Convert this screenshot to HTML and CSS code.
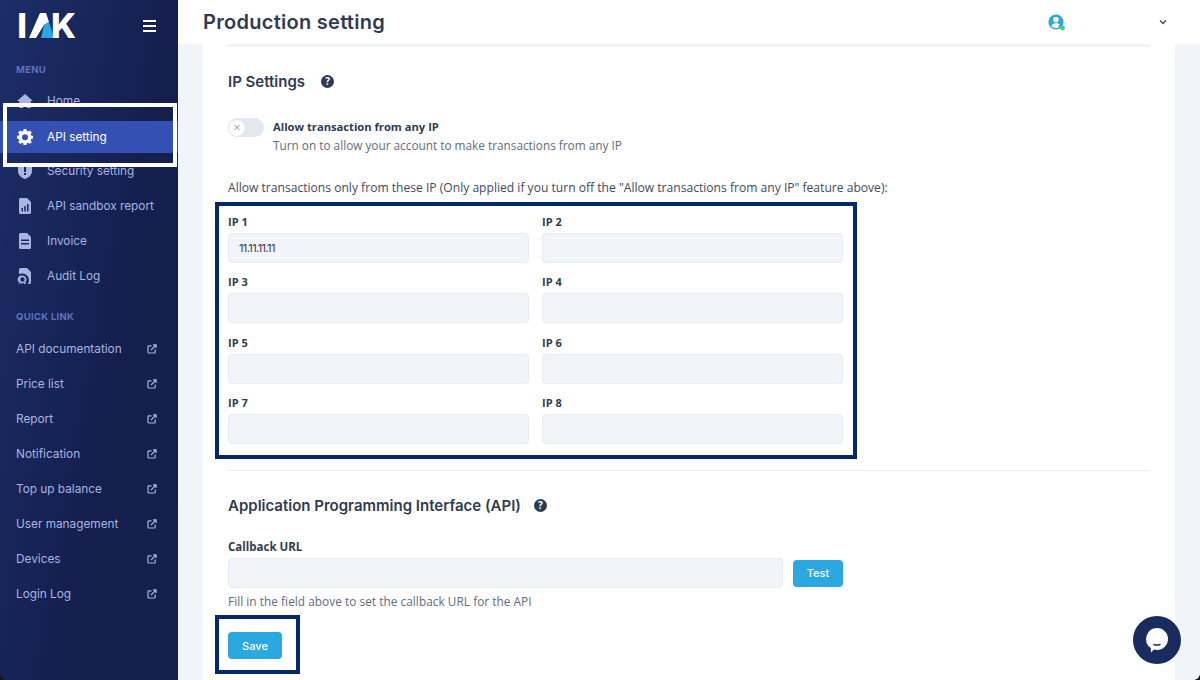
FILE: index.html
```html
<!DOCTYPE html>
<html lang="en">
<head>
  <meta charset="UTF-8">
  <meta name="viewport" content="width=device-width, initial-scale=1.0">
  <title>Production setting</title>
  <link rel="stylesheet" href="styles.css">
</head>
<body>
  <div class="app">
    <aside class="sidebar">
      <div class="brand">
        <svg class="logo" width="62" height="44" viewBox="0 -7 62 44">
          <text x="1.300" y="27" class="logo-letter">I</text>
          <polygon points="13,27 24,2 30,2 33,11 28,14 20,27" fill="#fff"/>
          <polygon points="28,14 33,11 38,27 25,27" fill="#2ba8e0"/>
          <text x="35" y="27" class="logo-letter">K</text>
        </svg>
        <div class="burger"><span></span><span></span><span></span></div>
      </div>

      <div class="nav-label nav-label-menu">MENU</div>
      <a class="nav-item">
        <svg class="nav-icon" viewBox="0 0 16 16"><path d="M8 1 0 8h2.200v7h4v-4.500h3.600V15h4V8H16z"/></svg>
        Home
      </a>
      <a class="nav-item active">
        <svg class="nav-icon" viewBox="0 0 16 16"><path fill-rule="evenodd" d="M6.600 0h2.800l.4 2.100 1.200.5L12.800 1.400l2 2-1.200 1.800.5 1.200 1.900.4v2.800l-1.900.4-.5 1.200 1.200 1.800-2 2-1.800-1.200-1.200.5-.4 2.100H6.600l-.4-2.100-1.200-.5-1.800 1.200-2-2 1.200-1.800-.5-1.200L0 9.600V6.800l1.900-.4.500-1.200L1.200 3.400l2-2L5 2.600l1.200-.5zM8 5.200a3 3 0 1 0 0 6 3 3 0 0 0 0-6z"/></svg>
        API setting
      </a>
      <a class="nav-item">
        <svg class="nav-icon" viewBox="0 0 16 16"><path fill-rule="evenodd" d="M8 0 15 2.500V8c0 4-3.200 6.800-7 8-3.800-1.200-7-4-7-8V2.500zM7 4v5h2V4zm0 6v2h2v-2z"/></svg>
        Security setting
      </a>
      <a class="nav-item">
        <svg class="nav-icon" viewBox="0 0 16 16"><path fill-rule="evenodd" d="M3.500 0H10l4 4v10.500a1.500 1.500 0 0 1-1.500 1.500h-9A1.500 1.500 0 0 1 2 14.500v-13A1.500 1.500 0 0 1 3.500 0zM4.500 10v3.500h1.500V10zm2.800-2v5.500h1.500V8zm2.800-2v7.500h1.500V6z"/></svg>
        API sandbox report
      </a>
      <a class="nav-item">
        <svg class="nav-icon" viewBox="0 0 16 16"><path fill-rule="evenodd" d="M3.500 0H10l4 4v10.500a1.500 1.500 0 0 1-1.500 1.500h-9A1.500 1.500 0 0 1 2 14.500v-13A1.500 1.500 0 0 1 3.500 0zM4 6.500V8h8V6.500zM4 10v1.500h8V10z"/></svg>
        Invoice
      </a>
      <a class="nav-item">
        <svg class="nav-icon" viewBox="0 0 16 16"><path fill-rule="evenodd" d="M3.500 0H10l4 4v10.500a1.500 1.500 0 0 1-1.500 1.500H11c.6-1 1-2.200 1-3.500C12 8.500 9 5.500 5 5.500c-1.100 0-2.100.2-3 .7V1.500A1.500 1.500 0 0 1 3.500 0zM5.500 7.500a4 4 0 0 1 2.500 7.100L9.500 16H7.500l-1-1a4 4 0 1 1-1-7.500zm0 1.800a2.200 2.200 0 1 0 0 4.400 2.200 2.200 0 0 0 0-4.400zM2.600 14l-1.400 1.600.9.400 1.400-1.400z"/></svg>
        Audit Log
      </a>

      <div class="nav-label nav-label-quick">QUICK LINK</div>
      <a class="quick-item">API documentation<svg class="ext-icon" viewBox="0 0 10 10"><use href="#ext"/></svg></a>
      <a class="quick-item">Price list<svg class="ext-icon" viewBox="0 0 10 10"><use href="#ext"/></svg></a>
      <a class="quick-item">Report<svg class="ext-icon" viewBox="0 0 10 10"><use href="#ext"/></svg></a>
      <a class="quick-item">Notification<svg class="ext-icon" viewBox="0 0 10 10"><use href="#ext"/></svg></a>
      <a class="quick-item">Top up balance<svg class="ext-icon" viewBox="0 0 10 10"><use href="#ext"/></svg></a>
      <a class="quick-item">User management<svg class="ext-icon" viewBox="0 0 10 10"><use href="#ext"/></svg></a>
      <a class="quick-item">Devices<svg class="ext-icon" viewBox="0 0 10 10"><use href="#ext"/></svg></a>
      <a class="quick-item">Login Log<svg class="ext-icon" viewBox="0 0 10 10"><use href="#ext"/></svg></a>
    </aside>

    <div class="main">
      <header class="topbar">
        <h1>Production setting</h1>
        <div class="user">
          <svg class="user-icon" width="18" height="18" viewBox="0 0 18 18">
            <circle cx="8" cy="8" r="7.600" fill="#2ba8e0"/>
            <circle cx="8" cy="5.800" r="2.700" fill="#fff"/>
            <path d="M3.500 12.500c.4-2.200 2.200-3.200 4.500-3.200 1.600 0 3 .4 3.800 1.200l-1.300 1.500.2 1.400c-2 .9-5 .7-7.200-.9z" fill="#fff"/>
            <circle cx="14.500" cy="14" r="2.400" fill="#3ccf8e"/>
          </svg>
          <svg class="chevron" width="8" height="6" viewBox="0 0 8 6"><path d="M1 1.500 4 4.500 7 1.500" fill="none" stroke="#3a4455" stroke-width="1.300"/></svg>
        </div>
      </header>

      <div class="content">
        <section class="card">
          <hr class="line line-top">

          <div class="section-title title-ip">
            <h2>IP Settings</h2>
            <span class="help">?</span>
          </div>

          <div class="toggle-row">
            <div class="toggle"><span class="knob">&times;</span></div>
            <div>
              <div class="toggle-title">Allow transaction from any IP</div>
              <div class="muted toggle-sub">Turn on to allow your account to make transactions from any IP</div>
            </div>
          </div>

          <p class="ip-note">Allow transactions only from these IP (Only applied if you turn off the "Allow transactions from any IP" feature above):</p>

          <div class="ip-grid">
            <div class="field"><label>IP 1</label><input type="text" value="11.11.11.11"></div>
            <div class="field"><label>IP 2</label><input type="text"></div>
            <div class="field"><label>IP 3</label><input type="text"></div>
            <div class="field"><label>IP 4</label><input type="text"></div>
            <div class="field"><label>IP 5</label><input type="text"></div>
            <div class="field"><label>IP 6</label><input type="text"></div>
            <div class="field"><label>IP 7</label><input type="text"></div>
            <div class="field"><label>IP 8</label><input type="text"></div>
          </div>

          <hr class="line line-mid">

          <div class="section-title title-api">
            <h2>Application Programming Interface (API)</h2>
            <span class="help">?</span>
          </div>

          <label class="callback-label">Callback URL</label>
          <div class="callback-row">
            <input type="text">
            <button class="btn btn-test">Test</button>
          </div>
          <div class="muted callback-help">Fill in the field above to set the callback URL for the API</div>
          <button class="btn btn-save">Save</button>
        </section>
      </div>
    </div>
  </div>

  <!-- annotation boxes that sit over the screenshot -->
  <div class="mark mark-nav"></div>
  <div class="mark mark-ip"></div>
  <div class="mark mark-save"></div>

  <div class="chat">
    <svg width="30" height="32" viewBox="0 0 30 32">
      <path d="M15 4a11 11 0 0 1 0 22c-1 0-2-.1-3-.4L9 28.500l-.2-4.500A11 11 0 0 1 15 4z" fill="#fff"/>
      <path d="M12 20.500c2 .8 4 .8 6 0" fill="none" stroke="#1a2b60" stroke-width="1.500" stroke-linecap="round"/>
    </svg>
  </div>

  <svg class="defs" width="0" height="0">
    <symbol id="ext" viewBox="0 0 10 10">
      <path d="M4.500 1.800H1.800a.8.8 0 0 0-.8.8v5.600c0 .4.400.8.800.8h5.600c.4 0 .8-.4.800-.8V5.500M4 6l5-5M6 .9h3.100V4" fill="none" stroke="#a9b4e0" stroke-width="1.200"/>
    </symbol>
  </svg>
</body>
</html>
```

FILE: styles.css
```css
* {
  box-sizing: border-box;
}

html, body {
  margin: 0;
  height: 680px;
  overflow: hidden;
}

body {
  position: relative;
  font-family: "Open Sans", Arial, sans-serif;
  background-color: #f1f4f9;
  color: #2f3b52;
}

/* rounded window corners at the bottom of the capture */
body::before,
body::after {
  content: "";
  position: absolute;
  bottom: 0;
  width: 6px;
  height: 6px;
  z-index: 2;
}

body::before {
  left: 0;
  background: radial-gradient(circle at top right, transparent 5.5px, #14161c 6px);
}

body::after {
  right: 0;
  background: radial-gradient(circle at top left, transparent 5.5px, #14161c 6px);
}

.app {
  display: flex;
  height: 680px;
}

/* sidebar */
.sidebar {
  width: 178px;
  flex-shrink: 0;
  background: linear-gradient(100deg, #1c2d68 0%, #141f4e 60%, #15204f 100%);
  color: #a9b4e0;
  font-family: Inter, Arial, sans-serif;
  font-size: 11.800px;
}

.brand {
  display: flex;
  align-items: center;
  justify-content: space-between;
  height: 50px;
  padding: 1px 22px 0 16px;
}

.logo-letter {
  font-family: Inter, Arial, sans-serif;
  font-weight: 800;
  font-size: 34px;
  fill: #fff;
}

.burger {
  display: flex;
  flex-direction: column;
  gap: 3px;
  width: 13px;
}

.burger span {
  height: 2px;
  background-color: #fff;
}

.nav-label {
  color: #5f72c0;
  font-size: 9.500px;
  font-weight: 700;
  letter-spacing: 0.3px;
  padding-left: 16px;
  line-height: 12px;
}

.nav-label-menu {
  margin-top: 14px;
  margin-bottom: 7.500px;
}

.nav-label-quick {
  margin-top: 17.500px;
  margin-bottom: 8px;
}

.nav-item {
  display: flex;
  align-items: center;
  gap: 14px;
  height: 35px;
  padding-left: 17px;
}

.nav-icon {
  width: 16px;
  height: 16px;
  fill: #a9b4e0;
}

.nav-item.active {
  height: 32px;
  margin: 2px 0 1px;
  background-color: #3450b2;
  color: #fff;
}

.nav-item.active .nav-icon {
  fill: #fff;
}

.quick-item {
  display: flex;
  align-items: center;
  justify-content: space-between;
  height: 35px;
  padding: 0 21px 0 16px;
}

.ext-icon {
  width: 10px;
  height: 10px;
}

/* main */
.main {
  flex: 1;
  min-width: 0;
  display: flex;
  flex-direction: column;
}

.topbar {
  display: flex;
  align-items: center;
  justify-content: space-between;
  height: 44px;
  flex-shrink: 0;
  padding: 0 33px 0 25px;
  background-color: #fff;
  position: relative;
}

.topbar h1 {
  margin: 0;
  font-family: Inter, Arial, sans-serif;
  font-size: 20px;
  font-weight: 600;
  letter-spacing: 0.28px;
}

.user {
  display: flex;
  align-items: center;
  gap: 93px;
}

.user-icon {
  margin-top: 2px;
}

.content {
  flex: 1;
  padding: 0 25px;
  min-height: 0;
}

.card {
  height: 100%;
  background-color: #fff;
  padding: 0 25px;
}

.line {
  margin: 0;
  border: 0;
  border-top: 1px solid #e8ebf0;
}

.line-top {
  border-top: 3px solid #f1f3f6;
}

.line-mid {
  margin-top: 19px;
}

.section-title {
  display: flex;
  align-items: center;
  gap: 15px;
}

.section-title h2 {
  margin: 0;
  font-family: Inter, Arial, sans-serif;
  font-size: 15px;
  font-weight: 600;
  line-height: 20px;
}

.title-ip {
  margin-top: 25px;
  gap: 16px;
}

.title-api {
  margin-top: 25px;
  gap: 13px;
}

.help {
  width: 13px;
  height: 13px;
  margin-top: -2px;
  border-radius: 50%;
  background-color: #2d3a50;
  color: #fff;
  font-size: 10px;
  font-weight: 700;
  line-height: 13px;
  text-align: center;
}

.toggle-row {
  display: flex;
  gap: 9px;
  margin-top: 25px;
}

.toggle {
  width: 36px;
  height: 19px;
  margin-top: 1px;
  border-radius: 10px;
  background-color: #e2e8f0;
}

.knob {
  display: block;
  width: 18px;
  height: 18px;
  margin-top: 0.5px;
  border-radius: 50%;
  border: 1px solid #dfe3ea;
  background-color: #fff;
  color: #9aa3b2;
  font-size: 13px;
  line-height: 15px;
  text-align: center;
}

.toggle-title {
  font-size: 11.200px;
  font-weight: 700;
  line-height: 19px;
}

.muted {
  color: #5f6b82;
  font-size: 11.800px;
}

.toggle-sub {
  line-height: 19px;
}

.ip-note {
  margin: 24px 0 0;
  font-size: 12.100px;
  line-height: 17px;
  color: #3e4a60;
}

.ip-grid {
  display: grid;
  grid-template-columns: 301px 301px;
  column-gap: 13px;
  row-gap: 0;
  margin-top: 14px;
}

.field {
  height: 60.3px;
}

label {
  display: block;
  font-size: 12px;
  font-weight: 700;
  line-height: 16px;
}

.field label {
  margin-top: 4px;
  margin-bottom: 3px;
  font-size: 11px;
}

input[type="text"] {
  display: block;
  width: 100%;
  height: 30px;
  padding: 0 10px;
  border: 1px solid #e8ebf1;
  border-radius: 4px;
  background-color: #f1f4f8;
  color: #2f3b52;
  font-family: Inter, Arial, sans-serif;
  font-size: 11px;
  letter-spacing: -0.6px;
}

.callback-label {
  margin-top: 23px;
  font-size: 11.500px;
}

.callback-row {
  display: flex;
  align-items: center;
  gap: 10px;
  width: 615px;
  margin-top: 3px;
}

.callback-row input {
  flex: 1;
}

.btn {
  border: none;
  border-radius: 4px;
  background-color: #2ba8e0;
  color: #fff;
  font-family: Inter, Arial, sans-serif;
  font-size: 11px;
  font-weight: 500;
}

.btn-test {
  width: 50px;
  height: 27px;
}

.btn-save {
  display: block;
  width: 54px;
  height: 27px;
  margin-top: 23px;
}

.callback-help {
  margin-top: 5px;
  line-height: 16px;
  letter-spacing: 0.05px;
}

/* annotation boxes */
.mark {
  position: absolute;
  border-style: solid;
}

.mark-nav {
  left: 3px;
  top: 103px;
  width: 174px;
  height: 64px;
  border-width: 4px;
  border-color: #fff;
}

.mark-ip {
  left: 215px;
  top: 202px;
  width: 642px;
  height: 257px;
  border-width: 4px;
  border-color: #04286e;
}

.mark-save {
  left: 215px;
  top: 615px;
  width: 85px;
  height: 59px;
  border-width: 4px;
  border-color: #04286e;
}

.chat {
  position: absolute;
  left: 1133px;
  top: 616px;
  width: 48px;
  height: 48px;
  display: flex;
  align-items: center;
  justify-content: center;
  border-radius: 50%;
  background-color: #1a2b60;
}

.defs {
  position: absolute;
}
```
